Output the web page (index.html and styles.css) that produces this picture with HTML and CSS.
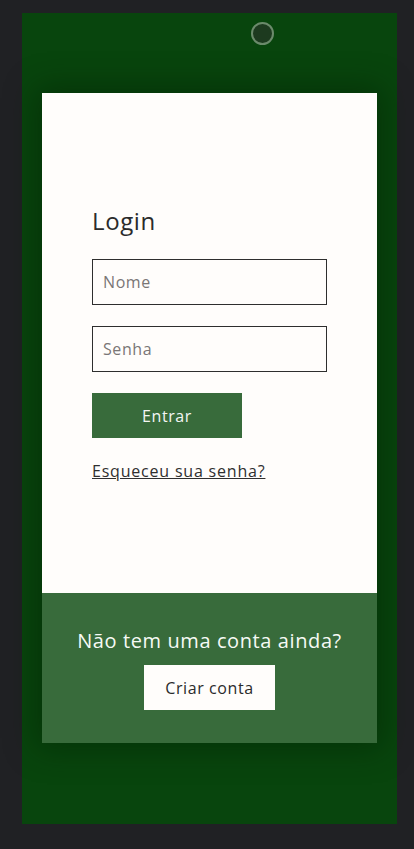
FILE: index.html
```html
<!DOCTYPE html>
<html lang="pt">
<head>
<meta charset="utf-8">
<title>Login</title>
<link rel="stylesheet" href="styles.css">
</head>
<body>
<div class="device">
  <div class="screen">
    <div class="camera"></div>
    <div class="card">
      <form class="login">
        <h1 class="title">Login</h1>
        <input class="field" type="text" placeholder="Nome">
        <input class="field" type="password" placeholder="Senha">
        <button class="btn-primary" type="button">Entrar</button>
        <a class="forgot" href="#">Esqueceu sua senha?</a>
      </form>
      <div class="signup">
        <p class="signup-text">Não tem uma conta ainda?</p>
        <button class="btn-secondary" type="button">Criar conta</button>
      </div>
    </div>
  </div>
</div>
</body>
</html>
```
FILE: styles.css
```css
* { box-sizing: border-box; }
html, body {
  margin: 0;
  padding: 0;
  background: #202124;
  font-family: "Open Sans", "Noto Sans", sans-serif;
}
.device {
  width: 414px;
  height: 849px;
  padding: 13px 17px 25px 22px;
  background: #202124;
}
.screen {
  position: relative;
  width: 375px;
  height: 811px;
  background: #08450d;
  padding: 80px 20px 0 20px;
}
.camera {
  position: absolute;
  left: 229px;
  top: 9px;
  width: 23px;
  height: 23px;
  border-radius: 50%;
  border: 2px solid #6b8a6b;
  background: #1d3a1f;
}
.card {
  width: 335px;
  box-shadow: 0 0 30px 6px rgba(0, 30, 0, 0.45);
}
.login {
  background: #fffdfb;
  height: 500px;
  padding: 110px 50px 0 50px;
  display: flex;
  flex-direction: column;
  align-items: flex-start;
}
.title {
  margin: 0 0 20px 0;
  font-size: 24px;
  line-height: 36px;
  font-weight: 500;
  letter-spacing: 0.6px;
  color: #2b2b2b;
}
.field {
  width: 235px;
  height: 46px;
  border: 1px solid #2e2e2e;
  border-radius: 0;
  padding: 0 10px;
  margin: 0 0 21px 0;
  font-family: inherit;
  font-size: 16px;
  letter-spacing: 0.6px;
  color: #333;
  background: #fffdfb;
  outline: none;
}
.field::placeholder { color: #7a7676; }
.btn-primary {
  width: 150px;
  height: 45px;
  border: none;
  background: #386b3b;
  color: #f4f6f4;
  font-family: inherit;
  font-size: 16px;
  letter-spacing: 0.6px;
  margin: 0 0 21px 0;
}
.forgot {
  font-size: 16px;
  line-height: 24px;
  letter-spacing: 0.8px;
  color: #2f2f2f;
  text-decoration: underline;
}
.signup {
  background: #386b3b;
  height: 150px;
  padding-top: 33px;
  display: flex;
  flex-direction: column;
  align-items: center;
}
.signup-text {
  margin: 0 0 9px 0;
  font-size: 20px;
  line-height: 30px;
  letter-spacing: 0.6px;
  color: #f6faf5;
}
.btn-secondary {
  width: 131px;
  height: 45px;
  border: none;
  background: #fffdfb;
  color: #2b2b2b;
  font-family: inherit;
  font-size: 16px;
  font-weight: 500;
  letter-spacing: 0.6px;
}
```
